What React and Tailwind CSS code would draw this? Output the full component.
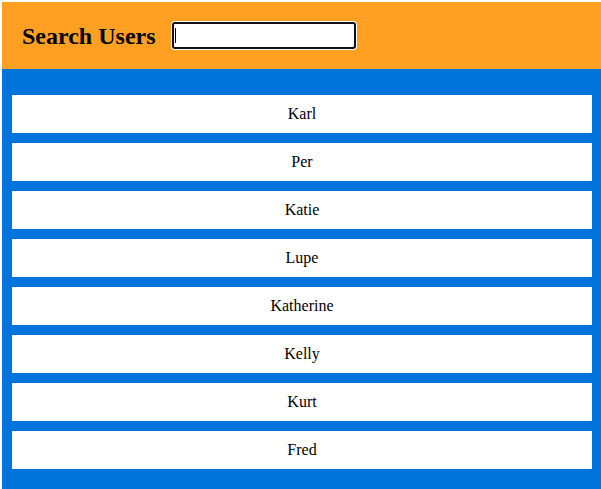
const USERS = ['Karl', 'Per', 'Katie', 'Lupe', 'Katherine', 'Kelly', 'Kurt', 'Fred']

export default function App() {
  return (
    <div className="pt-[2px] pl-[2px] bg-white min-h-screen" style={{ fontFamily: '"Liberation Serif", "Times New Roman", serif' }}>
      {/* Header */}
      <div className="h-[67px] bg-[#ffa023] flex items-center pl-5">
        <h1 className="text-[24px] font-bold text-black leading-none">Search Users</h1>
        <div className="relative ml-[16px]">
          <input
            type="text"
            className="block w-[184px] h-[27px] bg-white border-2 border-[#111] rounded-[3px] ring-1 ring-white outline-none px-[2px] text-[13px]"
          />
          {/* text caret */}
          <span className="absolute left-[3px] top-[6px] w-px h-[15px] bg-black" />
        </div>
      </div>

      {/* User list */}
      <div className="bg-[#0074dc] pt-[26px] pb-[22px] pl-[10px] pr-[9px] flex flex-col gap-[10px]">
        {USERS.map(name => (
          <div key={name} className="h-[38px] bg-white flex items-center justify-center text-[16px] text-black">
            {name}
          </div>
        ))}
      </div>
    </div>
  )
}
